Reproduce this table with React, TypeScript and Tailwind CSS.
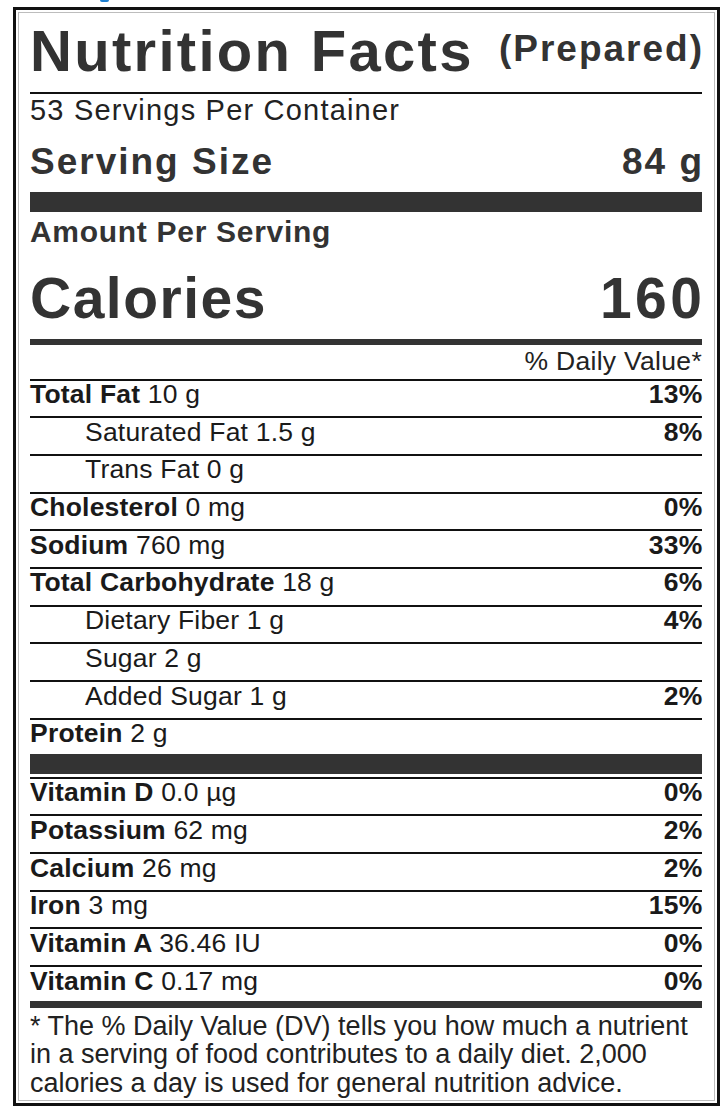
import React from 'react';

type Row = { name?: string; amount: string; dv?: string; indent?: boolean };

const nutrients: Row[] = [
  { name: 'Total Fat', amount: '10 g', dv: '13%' },
  { amount: 'Saturated Fat 1.5 g', dv: '8%', indent: true },
  { amount: 'Trans Fat 0 g', indent: true },
  { name: 'Cholesterol', amount: '0 mg', dv: '0%' },
  { name: 'Sodium', amount: '760 mg', dv: '33%' },
  { name: 'Total Carbohydrate', amount: '18 g', dv: '6%' },
  { amount: 'Dietary Fiber 1 g', dv: '4%', indent: true },
  { amount: 'Sugar 2 g', indent: true },
  { amount: 'Added Sugar 1 g', dv: '2%', indent: true },
];

const vitamins: Row[] = [
  { name: 'Vitamin D', amount: '0.0 µg', dv: '0%' },
  { name: 'Potassium', amount: '62 mg', dv: '2%' },
  { name: 'Calcium', amount: '26 mg', dv: '2%' },
  { name: 'Iron', amount: '3 mg', dv: '15%' },
  { name: 'Vitamin A', amount: '36.46 IU', dv: '0%' },
];

const NutrientRow: React.FC<{ row: Row; last?: boolean }> = ({ row, last }) => (
  <div
    className={
      'flex justify-between items-start pt-[0.5px] text-[26.5px] leading-none tracking-[0.2px] text-[#1a1a1a] ' +
      (last ? 'h-[34px]' : 'h-[37.7px] border-b-2 border-[#111]')
    }
  >
    <div className={row.indent ? 'pl-[55px]' : ''}>
      {row.name && <span className="font-bold">{row.name} </span>}
      <span>{row.amount}</span>
    </div>
    {row.dv && <span className="font-bold mr-[-0.5px]">{row.dv}</span>}
  </div>
);

const App: React.FC = () => {
  return (
    <div className="w-[724px] h-[1112px] bg-white font-[family-name:'Liberation_Sans',Arial,sans-serif] text-[#222]">
      <div className="h-[7px]">
        <div className="ml-[100px] w-[9px] h-[2px] rounded-b-full bg-[#1e7fd0]" />
      </div>

      <div className="ml-[13px] w-[707px] h-[1099px] border-[3px] border-[#111] p-[2px]">
        <div className="h-full border border-[#bdbdbd] pl-[11px] pr-[12px]">
          {/* header */}
          <div className="h-[79px] flex justify-between items-start border-b-2 border-[#111] box-content">
            <h1 className="mt-[9px] text-[58px] leading-none font-bold tracking-[2.3px] text-[#333]">
              Nutrition Facts
            </h1>
            <span className="mt-[17px] text-[37px] leading-none font-bold tracking-[2px] mr-[-2px] text-[#333]">
              (Prepared)
            </span>
          </div>

          <div className="h-[41px] pt-[1.5px] text-[29px] leading-none tracking-[1.2px] text-[#222]">
            53 Servings Per Container
          </div>

          <div className="h-[57px] pt-[8px] flex justify-between items-start text-[37px] leading-none font-bold tracking-[2px] text-[#333]">
            <span>Serving Size</span>
            <span className="mr-[-2px]">84 g</span>
          </div>

          <div className="h-[20px] bg-[#333]" />

          <div className="h-[38px] pt-[4.6px] text-[30px] leading-none font-bold tracking-[0.7px] text-[#333]">
            Amount Per Serving
          </div>

          <div className="h-[89px] pt-[20px] flex justify-between items-start text-[57px] leading-none font-bold tracking-[1.5px] text-[#333]">
            <span>Calories</span>
            <span className="tracking-[3.5px] mr-[-3.5px]">160</span>
          </div>

          <div className="h-[6px] bg-[#333]" />

          <div className="h-[31px] pt-[2.5px] flex justify-end text-[26.5px] leading-none tracking-[0.3px] text-[#222] border-b-2 border-[#111] box-content">
            % Daily Value*
          </div>

          {nutrients.map((r, i) => (
            <NutrientRow key={i} row={r} />
          ))}

          <NutrientRow row={{ name: 'Protein', amount: '2 g' }} last />

          <div className="h-[20px] bg-[#333]" />
          <div className="mt-[3px] border-t-2 border-[#111]" />

          {vitamins.map((r, i) => (
            <NutrientRow key={i} row={r} />
          ))}
          <NutrientRow row={{ name: 'Vitamin C', amount: '0.17 mg', dv: '0%' }} last />

          <div className="h-[7px] bg-[#333]" />

          <p className="pt-[3.4px] text-[27px] leading-[28.5px] whitespace-nowrap text-[#222]">
            * The % Daily Value (DV) tells you how much a nutrient
            <br />
            in a serving of food contributes to a daily diet. 2,000
            <br />
            calories a day is used for general nutrition advice.
          </p>
        </div>
      </div>
    </div>
  );
};

export default App;
